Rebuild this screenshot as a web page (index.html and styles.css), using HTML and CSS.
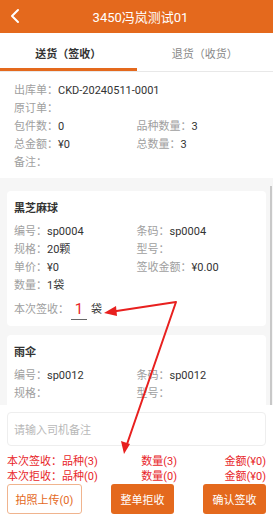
FILE: index.html
```html
<!DOCTYPE html>
<html lang="zh-CN">
<head>
    <meta charset="UTF-8">
    <meta name="viewport" content="width=device-width, initial-scale=1.0">
    <title>送货签收</title>
    <link rel="stylesheet" href="styles.css">
</head>
<body>
    <div class="page">
        <div class="header">
            <svg class="back" width="10" height="16" viewBox="0 0 10 16"><path d="M8 2 L2 8 L8 14" fill="none" stroke="#fff" stroke-width="2" stroke-linecap="round" stroke-linejoin="round"/></svg>
            <span class="title">3450冯岚测试01</span>
        </div>

        <div class="tabs">
            <div class="tab active">送货（签收）</div>
            <div class="tab">退货（收货）</div>
        </div>

        <div class="info">
            <div class="row"><span class="lbl">出库单：</span><span class="val">CKD-20240511-0001</span></div>
            <div class="row"><span class="lbl">原订单：</span></div>
            <div class="row two">
                <div><span class="lbl">包件数：</span><span class="val">0</span></div>
                <div><span class="lbl">品种数量：</span><span class="val">3</span></div>
            </div>
            <div class="row two">
                <div><span class="lbl">总金额：</span><span class="val">¥0</span></div>
                <div><span class="lbl">总数量：</span><span class="val">3</span></div>
            </div>
            <div class="row"><span class="lbl">备注：</span></div>
        </div>

        <div class="list">
            <div class="card">
                <div class="name">黑芝麻球</div>
                <div class="row two">
                    <div><span class="lbl">编号：</span><span class="val">sp0004</span></div>
                    <div><span class="lbl">条码：</span><span class="val">sp0004</span></div>
                </div>
                <div class="row two">
                    <div><span class="lbl">规格：</span><span class="val">20颗</span></div>
                    <div><span class="lbl">型号：</span></div>
                </div>
                <div class="row two">
                    <div><span class="lbl">单价：</span><span class="val">¥0</span></div>
                    <div><span class="lbl">签收金额：</span><span class="val">¥0.00</span></div>
                </div>
                <div class="row"><span class="lbl">数量：</span><span class="val">1袋</span></div>
                <div class="sign">
                    <span class="lbl">本次签收：</span>
                    <span class="qty">1</span>
                    <span class="val">袋</span>
                </div>
            </div>

            <div class="card">
                <div class="name">雨伞</div>
                <div class="row two">
                    <div><span class="lbl">编号：</span><span class="val">sp0012</span></div>
                    <div><span class="lbl">条码：</span><span class="val">sp0012</span></div>
                </div>
                <div class="row two">
                    <div><span class="lbl">规格：</span></div>
                    <div><span class="lbl">型号：</span></div>
                </div>
                <div class="row two">
                    <div><span class="lbl">单价：</span><span class="val">¥0</span></div>
                    <div><span class="lbl">签收金额：</span><span class="val">¥0.00</span></div>
                </div>
            </div>
        </div>

        <div class="footer">
            <div class="remark">请输入司机备注</div>
            <div class="sum">
                <span class="c1">本次签收：品种(3)</span>
                <span class="c2">数量(3)</span>
                <span class="c3">金额(¥0)</span>
            </div>
            <div class="sum">
                <span class="c1">本次拒收：品种(0)</span>
                <span class="c2">数量(0)</span>
                <span class="c3">金额(¥0)</span>
            </div>
            <div class="buttons">
                <div class="btn outline">拍照上传(0)</div>
                <div class="btn">整单拒收</div>
                <div class="btn">确认签收</div>
            </div>
        </div>

        <div class="scrollbar"></div>

        <!-- annotation arrows drawn over the screenshot -->
        <svg class="marks" width="273" height="518" viewBox="0 0 273 518">
            <polyline points="110,312 176,302 126,447" fill="none" stroke="#e8201f" stroke-width="2" stroke-linejoin="round"/>
            <polygon points="104,313 116,306 117,316" fill="#e8201f"/>
            <polygon points="124,454 121,441 130,444" fill="#e8201f"/>
        </svg>
    </div>
</body>
</html>
```

FILE: styles.css
```css
* {
    box-sizing: border-box;
}
html, body {
    margin: 0;
    padding: 0;
}
body {
    font-family: Roboto, "Noto Sans CJK SC", sans-serif;
    font-size: 11px;
    color: #333;
    background: #fff;
}
.page {
    position: relative;
    width: 273px;
    height: 518px;
    display: flex;
    flex-direction: column;
    overflow: hidden;
    background: #f6f6f6;
}

/* top bar */
.header {
    position: relative;
    height: 33px;
    flex: none;
    background: #e4691d;
    display: flex;
    align-items: center;
    justify-content: center;
}
.header .back {
    position: absolute;
    left: 10px;
    top: 8px;
}
.header .title {
    color: #fff;
    font-size: 13px;
    padding-left: 8px;
}

/* tabs */
.tabs {
    flex: none;
    height: 39px;
    display: flex;
    background: #fff;
    border-bottom: 1px solid #e8e8e8;
}
.tab {
    width: 50%;
    display: flex;
    align-items: center;
    justify-content: center;
    color: #888;
    font-size: 11px;
    padding-top: 1px;
}
.tab.active {
    color: #333;
    font-weight: bold;
    border-bottom: 3px solid #e4691d;
    padding-top: 4px;
}

/* order info */
.info {
    flex: none;
    background: #fff;
    padding: 10px 14px 6px;
}
.row {
    height: 18px;
    line-height: 18px;
    white-space: nowrap;
}
.row.two {
    display: flex;
}
.row.two > div {
    width: 123px;
}
.lbl {
    color: #a0a0a0;
}
.val {
    color: #333;
}

/* goods list */
.list {
    flex: 1;
    padding: 13px 7px 0;
    display: flex;
    flex-direction: column;
    gap: 9px;
    overflow: hidden;
}
.card {
    flex: none;
    background: #fff;
    border-radius: 4px;
    padding: 8px 7px 3px;
}
.card .name {
    height: 20px;
    line-height: 20px;
    font-weight: bold;
    font-size: 11px;
    margin-bottom: 4px;
}
.sign {
    height: 28px;
    display: flex;
    align-items: center;
    padding-bottom: 2px;
}
.sign .qty {
    display: inline-block;
    width: 16px;
    margin: 0 4px 0 2px;
    text-align: center;
    color: #e8262a;
    font-size: 15px;
    line-height: 18px;
    border-bottom: 1px solid #666;
    padding-bottom: 1px;
    margin-top: 4px;
}

/* bottom panel */
.footer {
    flex: none;
    background: #fff;
    padding: 7px 7px 4px;
}
.remark {
    height: 34px;
    border: 1px solid #eee;
    border-radius: 4px;
    padding: 0 6px;
    display: flex;
    align-items: center;
    color: #b8b8b8;
    font-size: 11px;
    margin-bottom: 8px;
}
.sum {
    height: 15px;
    line-height: 15px;
    display: flex;
    color: #e8262a;
    font-size: 11px;
}
.sum .c1 {
    width: 120px;
}
.sum .c2 {
    width: 50px;
    text-align: right;
}
.sum .c3 {
    flex: 1;
    text-align: right;
}
.buttons {
    display: flex;
    justify-content: space-between;
    height: 30px;
}
.btn {
    width: 63px;
    height: 30px;
    border-radius: 3px;
    background: #e4691d;
    color: #fff;
    display: flex;
    align-items: center;
    justify-content: center;
    font-size: 11px;
}
.btn.outline {
    width: 75px;
    background: #fff;
    color: #e4691d;
    border: 1px solid #f0b48e;
}

.scrollbar {
    position: absolute;
    right: 1px;
    top: 186px;
    width: 2px;
    height: 219px;
    background: #c8c8c8;
}
.marks {
    position: absolute;
    left: 0;
    top: 0;
    pointer-events: none;
}
```
